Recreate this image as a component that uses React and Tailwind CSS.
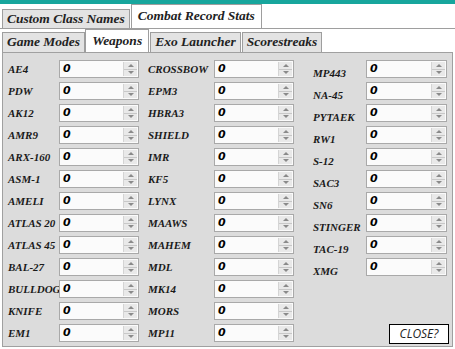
import React from 'react';

const col1 = ['AE4', 'PDW', 'AK12', 'AMR9', 'ARX-160', 'ASM-1', 'AMELI', 'ATLAS 20', 'ATLAS 45', 'BAL-27', 'BULLDOG', 'KNIFE', 'EM1'];
const col2 = ['CROSSBOW', 'EPM3', 'HBRA3', 'SHIELD', 'IMR', 'KF5', 'LYNX', 'MAAWS', 'MAHEM', 'MDL', 'MK14', 'MORS', 'MP11'];
const col3 = ['MP443', 'NA-45', 'PYTAEK', 'RW1', 'S-12', 'SAC3', 'SN6', 'STINGER', 'TAC-19', 'XMG'];

const serif = { fontFamily: '"Liberation Serif", "DejaVu Serif", serif' };

const Spinner = () => (
  <div className="flex flex-col w-[14px] h-full border-l border-[#d4d4d4] bg-[#f0f0f0]">
    <div className="flex-1 flex items-center justify-center border-b border-[#c8c8c8] bg-[#e9e9e9]">
      <div className="w-0 h-0 border-l-[3px] border-r-[3px] border-b-[3px] border-l-transparent border-r-transparent border-b-[#8a8a8a]" />
    </div>
    <div className="flex-1 flex items-center justify-center bg-[#e9e9e9]">
      <div className="w-0 h-0 border-l-[3px] border-r-[3px] border-t-[3px] border-l-transparent border-r-transparent border-t-[#8a8a8a]" />
    </div>
  </div>
);

const Fila = ({ nombre, labelW, inputW, bajar }) => (
  <div className="flex items-center h-[18px] mb-[4px]">
    <div className={`${labelW} ${bajar ? 'pt-[8px]' : ''} text-[11px] font-bold italic text-[#1a1a1a] leading-none`} style={serif}>
      {nombre}
    </div>
    <div className={`${inputW} h-[18px] flex border border-[#a9a9a9] bg-[#fbfbfb]`}>
      <div className="flex-1 pl-[3px] flex items-center text-[11px] font-bold italic text-black" style={{ fontFamily: '"DejaVu Sans", sans-serif' }}>
        0
      </div>
      <div className="py-[1px] pr-[1px] h-full">
        <Spinner />
      </div>
    </div>
  </div>
);

const App = () => {
  return (
    <div className="w-[455px] h-[349px] bg-white relative overflow-hidden" style={serif}>
      <div className="h-[4px] bg-[#17a69d]" />

      <div className="flex items-end h-[24px] pl-[2px]">
        <div className="h-[19px] px-[4px] flex items-center bg-[#e3e3e3] border border-[#9e9e9e] border-b-0 text-[13.5px] font-bold italic text-[#222]">
          Custom Class Names
        </div>
        <div className="h-[24px] ml-[1px] px-[6px] flex items-center bg-white border border-[#9e9e9e] border-b-0 text-[13.5px] font-bold italic text-[#222]">
          Combat Record Stats
        </div>
        <div className="flex-1 h-full" />
      </div>

      <div className="border-t border-[#9e9e9e]">
        <div className="flex items-end h-[23px] pl-[2px]">
          <div className="h-[20px] px-[4px] flex items-center bg-[#e3e3e3] border border-[#9e9e9e] border-b-0 text-[13.5px] font-bold italic text-[#222]">
            Game Modes
          </div>
          <div className="h-[23px] px-[6px] flex items-center bg-white border border-[#9e9e9e] border-b-0 text-[13.5px] font-bold italic text-[#222]">
            Weapons
          </div>
          <div className="h-[20px] ml-[1px] px-[4px] flex items-center bg-[#e3e3e3] border border-[#9e9e9e] border-b-0 text-[13.5px] font-bold italic text-[#222]">
            Exo Launcher
          </div>
          <div className="h-[20px] ml-[1px] px-[4px] flex items-center bg-[#e3e3e3] border border-[#9e9e9e] border-b-0 text-[13.5px] font-bold italic text-[#222]">
            Scorestreaks
          </div>
        </div>

        <div className="mx-[2px] h-[295px] bg-[#dcdcdc] border border-[#a0a0a0] relative">
          <div className="flex pt-[7px] pl-[5px]">
            <div className="w-[140px]">
              {col1.map((n) => (
                <Fila key={n} nombre={n} labelW="w-[51px]" inputW="w-[80px]" />
              ))}
            </div>
            <div className="w-[165px]">
              {col2.map((n) => (
                <Fila key={n} nombre={n} labelW="w-[66px]" inputW="w-[80px]" />
              ))}
            </div>
            <div>
              {col3.map((n) => (
                <Fila key={n} nombre={n} labelW="w-[53px]" inputW="w-[81px]" bajar />
              ))}
            </div>
          </div>

          <button className="absolute right-[3px] bottom-[2px] w-[60px] h-[20px] bg-white border border-black text-[12px] italic text-[#222]" style={{ fontFamily: '"Open Sans", sans-serif' }}>
            CLOSE?
          </button>
        </div>
      </div>
    </div>
  );
};

export default App;
